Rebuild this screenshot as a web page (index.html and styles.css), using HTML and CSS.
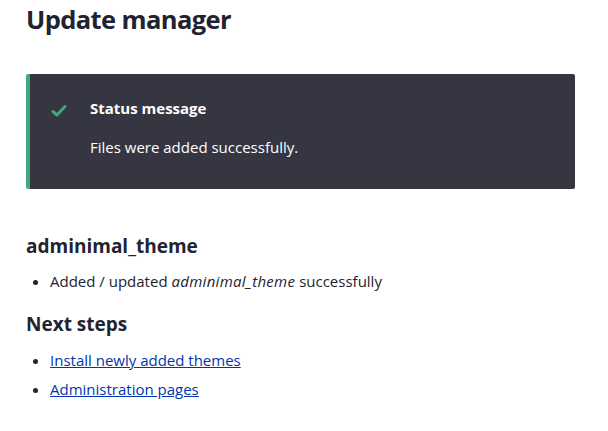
FILE: index.html
```html
<!DOCTYPE html>
<html lang="en">
<head>
<meta charset="utf-8">
<title>Update manager</title>
<link rel="stylesheet" href="styles.css">
</head>
<body>
<main class="page">
  <h1 class="page-title">Update manager</h1>
  <div class="message" role="status">
    <div class="message-icon">
      <svg width="16" height="14" viewBox="0 0 16 14"><path d="M2 7.5 L6 11 L14 2.5" fill="none" stroke="#42a877" stroke-width="3" stroke-linecap="round" stroke-linejoin="round"/></svg>
    </div>
    <div class="message-body">
      <h2 class="message-title">Status message</h2>
      <p class="message-text">Files were added successfully.</p>
    </div>
  </div>
  <h3 class="section-title">adminimal_theme</h3>
  <ul class="list">
    <li>Added / updated <em>adminimal_theme</em> successfully</li>
  </ul>
  <h3 class="section-title next">Next steps</h3>
  <ul class="list links">
    <li><a href="#">Install newly added themes</a></li>
    <li><a href="#">Administration pages</a></li>
  </ul>
</main>
</body>
</html>
```
FILE: styles.css
```css
html, body {
  margin: 0;
  padding: 0;
  background: #ffffff;
}
body {
  font-family: "Open Sans", "Noto Sans", sans-serif;
  color: #222330;
  font-size: 15px;
}
.page {
  padding: 0 33px 0 26px;
}
.page-title {
  margin: 0;
  padding-top: 3px;
  font-size: 25.5px;
  line-height: 32px;
  font-weight: 700;
  letter-spacing: -0.6px;
}
.message {
  margin-top: 39px;
  display: flex;
  background: #353641;
  border-left: 4px solid #42a877;
  border-radius: 2px;
  color: #ffffff;
  padding: 24px 24px 26px 21px;
  min-height: 65px;
}
.message-icon {
  width: 16px;
  padding-top: 4px;
  margin-right: 23px;
}
.message-title {
  margin: 0;
  font-size: 15px;
  line-height: 20px;
  font-weight: 700;
}
.message-text {
  margin: 18px 0 0;
  font-size: 15px;
  line-height: 22px;
}
.section-title {
  margin: 44px 0 0;
  font-size: 19px;
  line-height: 26px;
  font-weight: 700;
}
.section-title.next {
  margin-top: 18px;
}
.list {
  margin: 10px 0 0;
  padding-left: 24px;
}
.list li {
  line-height: 24px;
}
.list em {
  letter-spacing: 0.3px;
}
.links {
  margin-top: 9px;
}
.links li {
  line-height: 29px;
}
a {
  color: #0036b1;
  text-decoration: underline;
}
```
